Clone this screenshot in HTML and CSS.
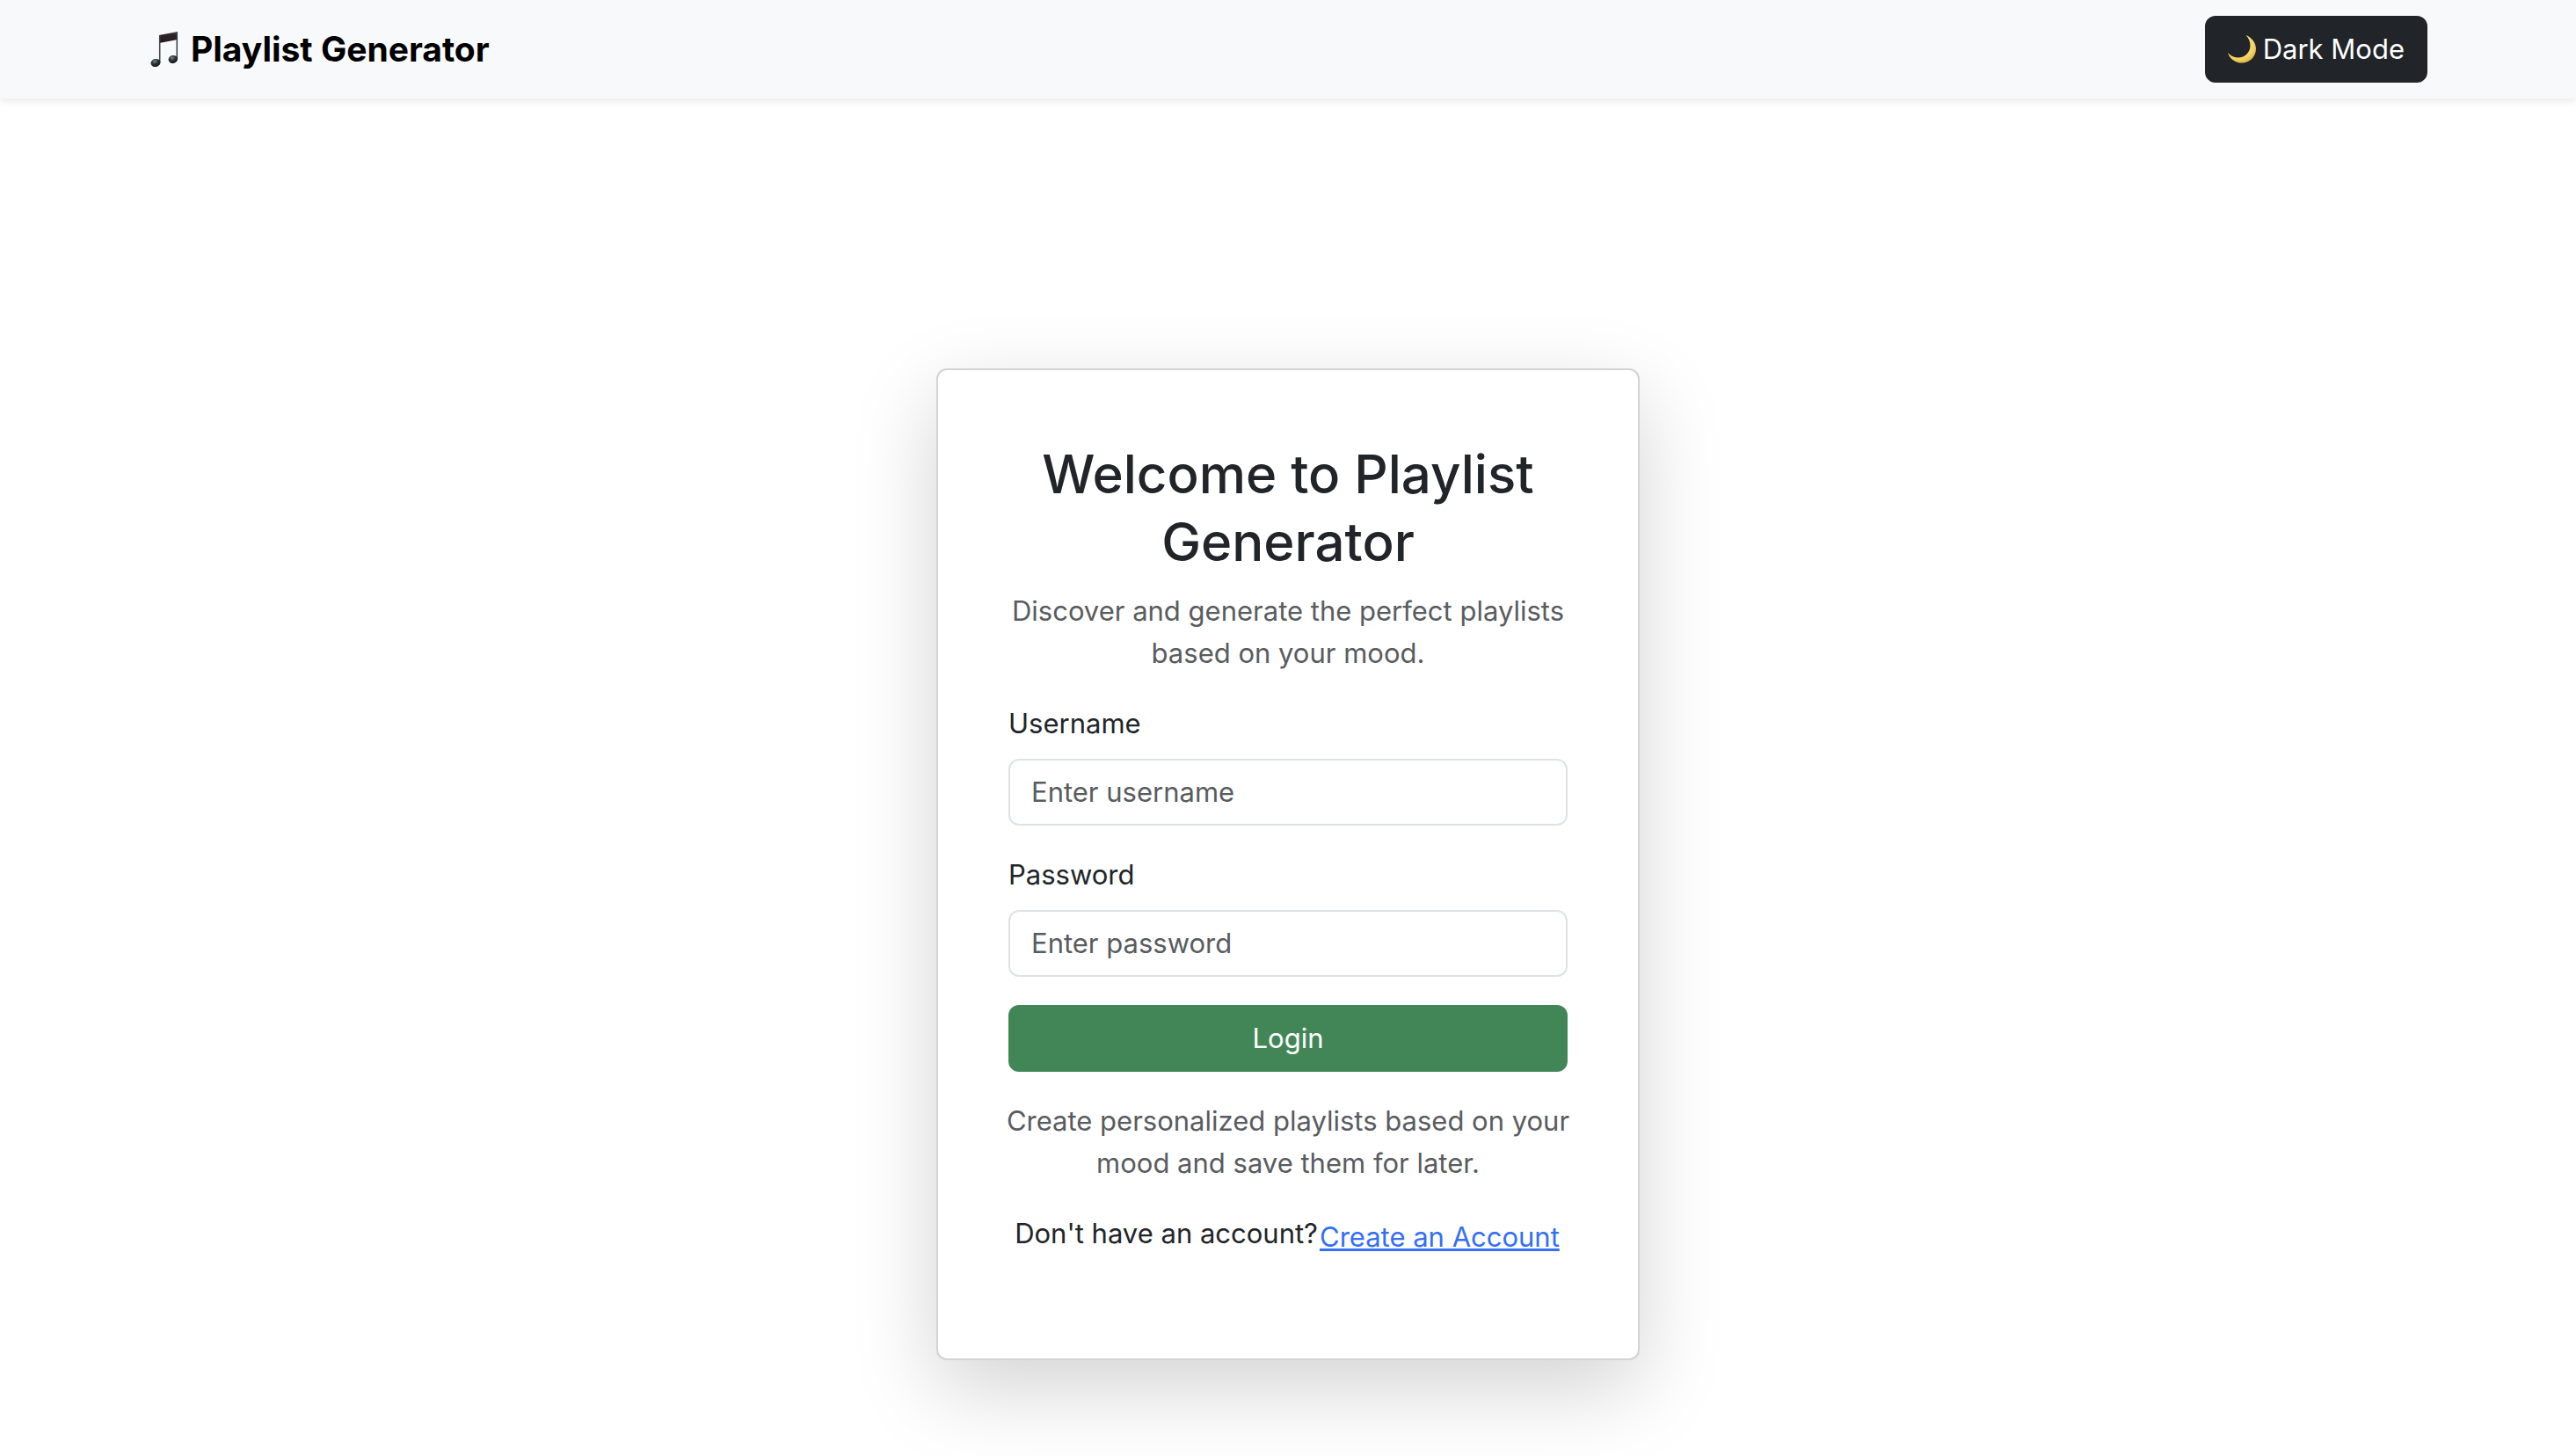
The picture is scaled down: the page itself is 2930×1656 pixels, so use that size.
FILE: index.html
```html
<!DOCTYPE html>
<html lang="en">
<head>
  <meta charset="utf-8">
  <meta name="viewport" content="width=device-width, initial-scale=1">
  <title>Playlist Generator</title>
  <link rel="stylesheet" href="styles.css">
</head>
<body>
  <header class="navbar">
    <div class="container">
      <a class="brand" href="#">
        <svg class="brand-icon" viewBox="0 0 32 42" aria-hidden="true">
          <defs>
            <linearGradient id="beam" x1="0" y1="0" x2="0" y2="1">
              <stop offset="0" stop-color="#4a4548"/>
              <stop offset=".3" stop-color="#2b2226"/>
              <stop offset="1" stop-color="#241c20"/>
            </linearGradient>
            <radialGradient id="head" cx=".45" cy=".3" r=".7">
              <stop offset="0" stop-color="#7d868c"/>
              <stop offset=".45" stop-color="#2c343a"/>
              <stop offset="1" stop-color="#14181b"/>
            </radialGradient>
          </defs>
          <path d="M10 5 31 1V10L10 14Z" fill="url(#beam)"/>
          <path d="M10.700 5V36M30.300 2V32" fill="none" stroke="#3b4045" stroke-width="1.500"/>
          <ellipse cx="6" cy="36.500" rx="5.500" ry="4.500" transform="rotate(-12 6 36.500)" fill="url(#head)"/>
          <ellipse cx="25.800" cy="32.500" rx="5.300" ry="4.500" transform="rotate(-12 25.800 32.500)" fill="url(#head)"/>
        </svg>
        <span>Playlist Generator</span>
      </a>
      <button class="btn btn-dark" type="button">
        <svg class="moon-icon" viewBox="0 0 32 32" aria-hidden="true">
          <defs>
            <radialGradient id="moon" cx=".4" cy=".35" r=".7">
              <stop offset=".4" stop-color="#fbe58a"/>
              <stop offset=".75" stop-color="#f2d264"/>
              <stop offset="1" stop-color="#d9ad3c"/>
            </radialGradient>
          </defs>
          <path d="M20.500 0C27 2.500 32 8.500 32 15.500C32 24.500 25 31.500 16 31.500C8.500 31.500 2 27 0 20C3.500 24 7.500 25.500 12 25.500C19.500 25.500 25.500 19.500 25.500 12C25.500 7.500 24 3.500 20.500 0Z" fill="url(#moon)"/>
        </svg>
        <span>Dark Mode</span>
      </button>
    </div>
  </header>

  <main class="page">
    <section class="card">
      <h1 class="title">Welcome to Playlist Generator</h1>
      <p class="text muted">Discover and generate the perfect playlists based on your mood.</p>
      <form class="form">
        <div class="field">
          <label for="username">Username</label>
          <input id="username" type="text" placeholder="Enter username">
        </div>
        <div class="field">
          <label for="password">Password</label>
          <input id="password" type="password" placeholder="Enter password">
        </div>
        <button class="btn btn-login" type="submit">Login</button>
      </form>
      <p class="text muted">Create personalized playlists based on your mood and save them for later.</p>
      <div class="signup">
        <span>Don't have an account?</span>
        <a class="signup-link" href="#">Create an Account</a>
      </div>
    </section>
  </main>
</body>
</html>
```
FILE: styles.css
```css
* {
  box-sizing: border-box;
}

body {
  min-height: 100vh;
  margin: 0;
  background: #fff;
  color: #212529;
  font-family: Inter, "Liberation Sans", sans-serif;
  font-size: 31px;
  line-height: 48px;
}

.navbar {
  padding: 18px 0;
  background: #f8f9fb;
  box-shadow: 0 4px 8px rgba(0, 0, 0, .075);
}

.container {
  display: flex;
  align-items: center;
  justify-content: space-between;
  max-width: 2640px;
  margin: 0 auto;
  padding: 0 24px;
}

.brand {
  display: flex;
  align-items: center;
  gap: 12px;
  color: #000;
  font-size: 39px;
  font-weight: 700;
  text-decoration: none;
}

.brand-icon {
  width: 36px;
  height: 42px;
}

.btn {
  display: flex;
  align-items: center;
  justify-content: center;
  padding: 12px 24px;
  border: 2px solid transparent;
  border-radius: 12px;
  color: #fff;
  font: inherit;
  cursor: pointer;
}

.btn-dark {
  gap: 8px;
  border-color: #212529;
  background: #212529;
}

.moon-icon {
  width: 32px;
  height: 32px;
}

.page {
  display: flex;
  justify-content: center;
  padding: 307px 24px 108px;
}

.card {
  width: 100%;
  max-width: 800px;
  padding: 80px 80px 110px;
  border: 2px solid #d3d3d3;
  border-radius: 12px;
  background: #fff;
  box-shadow: 0 32px 96px rgba(0, 0, 0, .175);
}

.title {
  margin: 0 0 16px;
  font-size: 60px;
  font-weight: 500;
  line-height: 77px;
  text-align: center;
}

.text {
  margin: 0 -8px 32px;
  text-align: center;
}

.muted {
  color: #595c5f;
}

.form {
  display: grid;
  gap: 32px;
  margin-bottom: 32px;
}

.field {
  display: grid;
  gap: 16px;
}

.field input {
  width: 100%;
  padding: 12px 24px;
  border: 2px solid #dee2e6;
  border-radius: 12px;
  background: #fff;
  color: #212529;
  font: inherit;
}

.field input::placeholder {
  color: #595c5f;
  opacity: 1;
}

.btn-login {
  border-color: #428658;
  background: #428658;
}

.signup {
  display: flex;
  justify-content: center;
}

.signup-link {
  padding: 2px 0;
  border: 2px solid transparent;
  color: #346ff4;
}
```
